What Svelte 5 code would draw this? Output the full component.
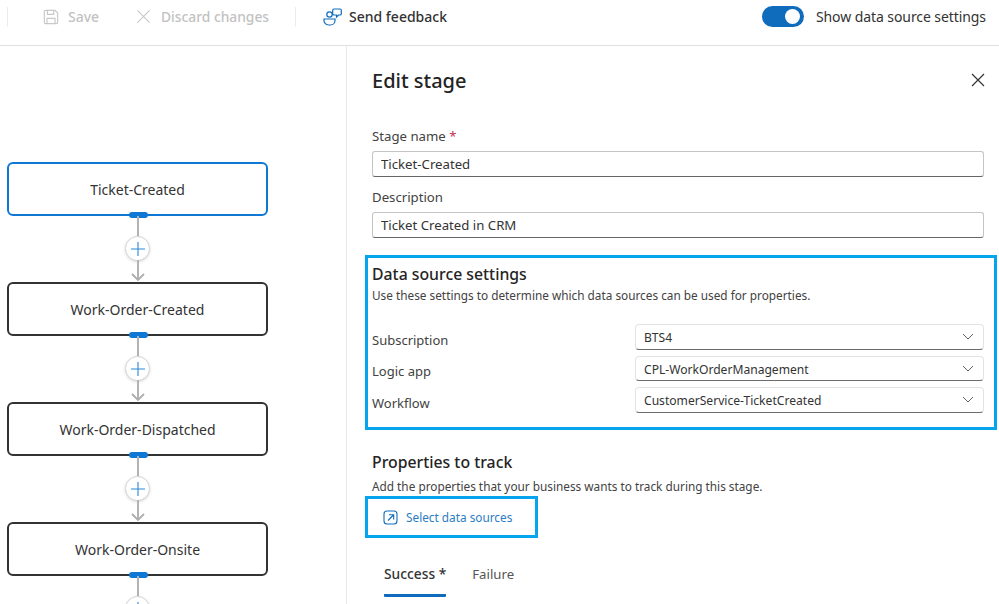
<script>
  const stages = ['Ticket-Created', 'Work-Order-Created', 'Work-Order-Dispatched', 'Work-Order-Onsite'];
  const sources = [
    { label: 'Subscription', value: 'BTS4' },
    { label: 'Logic app', value: 'CPL-WorkOrderManagement' },
    { label: 'Workflow', value: 'CustomerService-TicketCreated' }
  ];
</script>

<div class="page">
  <header class="bar">
    <div class="sep first"></div>
    <div class="cmd disabled save">
      <svg width="16" height="16" viewBox="0 0 18 18" fill="none" stroke="#c8c8c8" stroke-width="1.300"><path d="M2.500 1.500h11l3 3v10.500a1.500 1.500 0 0 1-1.500 1.500H3a1.500 1.500 0 0 1-1.500-1.500V2.500a1 1 0 0 1 1-1z"/><path d="M5 1.500v4.500h7V1.500M4.500 16.500V10.500h9v6"/></svg>
      <span>Save</span>
    </div>
    <div class="cmd disabled discard">
      <svg width="15" height="15" viewBox="0 0 16 16" fill="none" stroke="#c8c8c8" stroke-width="1.200"><path d="M1.500 1.500l13 13M14.500 1.500l-13 13"/></svg>
      <span>Discard changes</span>
    </div>
    <div class="sep"></div>
    <div class="cmd feedback">
      <svg width="19" height="18" viewBox="0 0 19 18" fill="none" stroke="#0f6cbd" stroke-width="1.200"><circle cx="6.500" cy="6.500" r="2.700"/><path d="M1 11h11v1.500a4.500 4.500 0 0 1-4.500 4.500h-2A4.500 4.500 0 0 1 1 12.500z"/><path d="M11 1h6a1.300 1.300 0 0 1 1.300 1.300v3.400A1.300 1.300 0 0 1 17 7h-1.500l-2 2V7H11a1.300 1.300 0 0 1-1.300-1.300V2.300A1.300 1.300 0 0 1 11 1z"/></svg>
      <span>Send feedback</span>
    </div>
    <div class="toggle-wrap">
      <div class="toggle"><div class="knob"></div></div>
      <span>Show data source settings</span>
    </div>
  </header>

  <div class="main">
    <section class="canvas">
      {#each stages as s, i}
        <div class="node" class:active={i === 0}>
          {s}
          <div class="handle"></div>
        </div>
        <div class="link">
          <div class="line"></div>
          <div class="plus">
            <svg width="16" height="16" viewBox="0 0 16 16" stroke="#2b88d8" stroke-width="1.100"><path d="M8 1v14M1 8h14"/></svg>
          </div>
          <div class="line lower"></div>
          {#if i < 3}
            <svg class="arrow" width="14" height="8" viewBox="0 0 14 8" fill="none" stroke="#adadad" stroke-width="1.800"><path d="M1 1l6 6 6-6"/></svg>
          {/if}
        </div>
      {/each}
    </section>

    <aside class="panel">
      <div class="title-row">
        <h1>Edit stage</h1>
        <svg width="14" height="14" viewBox="0 0 14 14" fill="none" stroke="#333" stroke-width="1.200"><path d="M1 1l12 12M13 1L1 13"/></svg>
      </div>

      <label class="lbl first-lbl" for="stage-name">Stage name <em>*</em></label>
      <input id="stage-name" class="text" value="Ticket-Created" />
      <label class="lbl" for="stage-desc">Description</label>
      <input id="stage-desc" class="text" value="Ticket Created in CRM" />

      <div class="callout sources">
        <h2>Data source settings</h2>
        <p>Use these settings to determine which data sources can be used for properties.</p>
        <div class="rows">
          {#each sources as r}
            <div class="row">
              <span class="row-label">{r.label}</span>
              <div class="select">
                <span>{r.value}</span>
                <svg width="12" height="7" viewBox="0 0 12 7" fill="none" stroke="#616161" stroke-width="1"><path d="M1 1l5 5 5-5"/></svg>
              </div>
            </div>
          {/each}
        </div>
      </div>

      <h2 class="track">Properties to track</h2>
      <p class="track-sub">Add the properties that your business wants to track during this stage.</p>

      <div class="callout link-box">
        <svg width="15" height="15" viewBox="0 0 15 15" fill="none" stroke="#0f6cbd" stroke-width="1.100"><rect x="1" y="1" width="13" height="13" rx="3"/><path d="M5 10.500L10.500 5M6 4.800h4.700v4.700"/></svg>
        <span>Select data sources</span>
      </div>

      <div class="tabs">
        <div class="tab on">Success *</div>
        <div class="tab">Failure</div>
      </div>
    </aside>
  </div>
</div>

<style>
  :global(body) { margin: 0; background: #fff; }
  .page {
    width: 999px; height: 604px; overflow: hidden; background: #fff; color: #242424;
    font-family: "Noto Sans", "Open Sans", sans-serif; font-size: 14px;
    display: flex; flex-direction: column;
  }
  .bar {
    height: 33px; padding: 0 0 12px 7px; flex: none; border-bottom: 1px solid #e0e0e0;
    display: flex; align-items: center; box-sizing: content-box;
  }
  .sep { width: 1px; height: 20px; background: #ececec; }
  .cmd { display: flex; align-items: center; font-weight: 500; font-size: 14px; }
  .disabled { color: #c2c2c2; }
  .save { margin-left: 35px; gap: 9px; width: 93px; }
  .discard { gap: 10px; font-size: 13.800px; }
  .discard + .sep { margin-left: 26px; }
  .feedback { margin-left: 27px; gap: 7px; color: #333; }
  .toggle-wrap { margin-left: auto; margin-right: 13px; display: flex; align-items: center; gap: 12px; font-size: 14px; color: #333; letter-spacing: -0.080px; }
  .toggle { width: 42px; height: 21px; border-radius: 11px; background: #0f6cbd; display: flex; align-items: center; justify-content: flex-end; padding-right: 4px; box-sizing: border-box; }
  .knob { width: 15px; height: 15px; border-radius: 50%; background: #fff; }

  .main { flex: 1; display: flex; min-height: 0; }
  .canvas {
    flex: none; border-right: 1px solid #e8e8e8; box-sizing: content-box;
    padding: 116px 0 0 7px; width: 339px; overflow: hidden;
    display: flex; flex-direction: column; align-items: flex-start;
  }
  .node {
    width: 261px; height: 54px; flex: none; box-sizing: border-box; border: 2px solid #333; border-radius: 6px;
    display: flex; align-items: center; justify-content: center; position: relative; background: #fff;
    font-size: 14px; color: #333;
  }
  .node.active { border-color: #0f78d4; }
  .handle { position: absolute; left: 120px; bottom: -4px; width: 19px; height: 6px; border-radius: 3px; background: #0f78d4; }
  .link { width: 261px; height: 66px; flex: none; display: flex; flex-direction: column; align-items: center; position: relative; }
  .line { width: 2px; height: 21px; background: #b3b3b3; }
  .line.lower { height: 19px; }
  .plus {
    width: 25px; height: 25px; flex: none; margin: -1px 0; border-radius: 50%; background: #fff; border: 1px solid #d6d6d6; box-sizing: border-box;
    box-shadow: 0 1px 3px rgba(0,0,0,.15); display: flex; align-items: center; justify-content: center;
  }
  .arrow { position: absolute; left: 124px; bottom: 1px; }

  .panel { flex: 1; padding: 0 15px 0 25px; position: relative; min-width: 0; }
  .title-row { display: flex; align-items: center; justify-content: space-between; height: 24px; margin-top: 22px; margin-right: -1px; }
  h1 { margin: 0; font-size: 20px; font-weight: 500; color: #242424; }
  .lbl { display: block; font-size: 13.200px; line-height: 18px; color: #424242; margin: 11px 0 6px; }
  .first-lbl { margin-top: 35px; }
  .lbl em { color: #c4314b; font-style: normal; }
  .text {
    display: block; width: 100%; height: 26px; box-sizing: border-box; padding: 0 8px; margin: 0;
    border: 1px solid #c4c4c4; border-bottom-color: #666; border-radius: 3px; background: #fff;
    font: 13.200px "Noto Sans", sans-serif; color: #333; outline: none;
  }
  .callout { border: 3px solid #04a5ee; box-sizing: border-box; margin-left: -7px; }
  .sources { width: 632px; height: 175px; margin-top: 17px; padding: 6px 10px 0 4px; margin-right: -13px; }
  h2 { margin: 0; font-size: 15.800px; line-height: 21px; font-weight: 500; color: #242424; }
  p { margin: 2px 0 0; font-size: 11.800px; line-height: 16px; color: #424242; }
  .rows { margin-top: 21px; display: flex; flex-direction: column; gap: 6px; }
  .row { display: flex; align-items: center; justify-content: space-between; height: 25.500px; }
  .row-label { font-size: 13px; position: relative; top: 3px; color: #424242; }
  .select {
    width: 349px; height: 100%; box-sizing: border-box; display: flex; align-items: center; justify-content: space-between;
    padding: 2px 9px 0 8px; border: 1px solid #e3e3e3; border-bottom-color: #6b6b6b; border-radius: 4px;
    font-size: 12.100px; color: #333;
  }
  .select svg { position: relative; top: -1px; }
  .track { margin-top: 22px; }
  p.track-sub { margin-top: 5px; }
  .link-box { width: 173px; height: 42px; margin-top: 2px; display: flex; align-items: center; gap: 8px; padding-left: 15px; color: #2b7cc4; font-size: 11.800px; }
  .tabs { display: flex; gap: 26px; margin: 25px 0 0 12px; font-size: 13.200px; color: #555; align-items: baseline; }
  .tab { height: 31px; line-height: 22px; box-sizing: content-box; }
  .tab.on { font-weight: 500; font-size: 13.800px; color: #333; border-bottom: 3px solid #0f6cbd; border-radius: 1px; }
</style>
